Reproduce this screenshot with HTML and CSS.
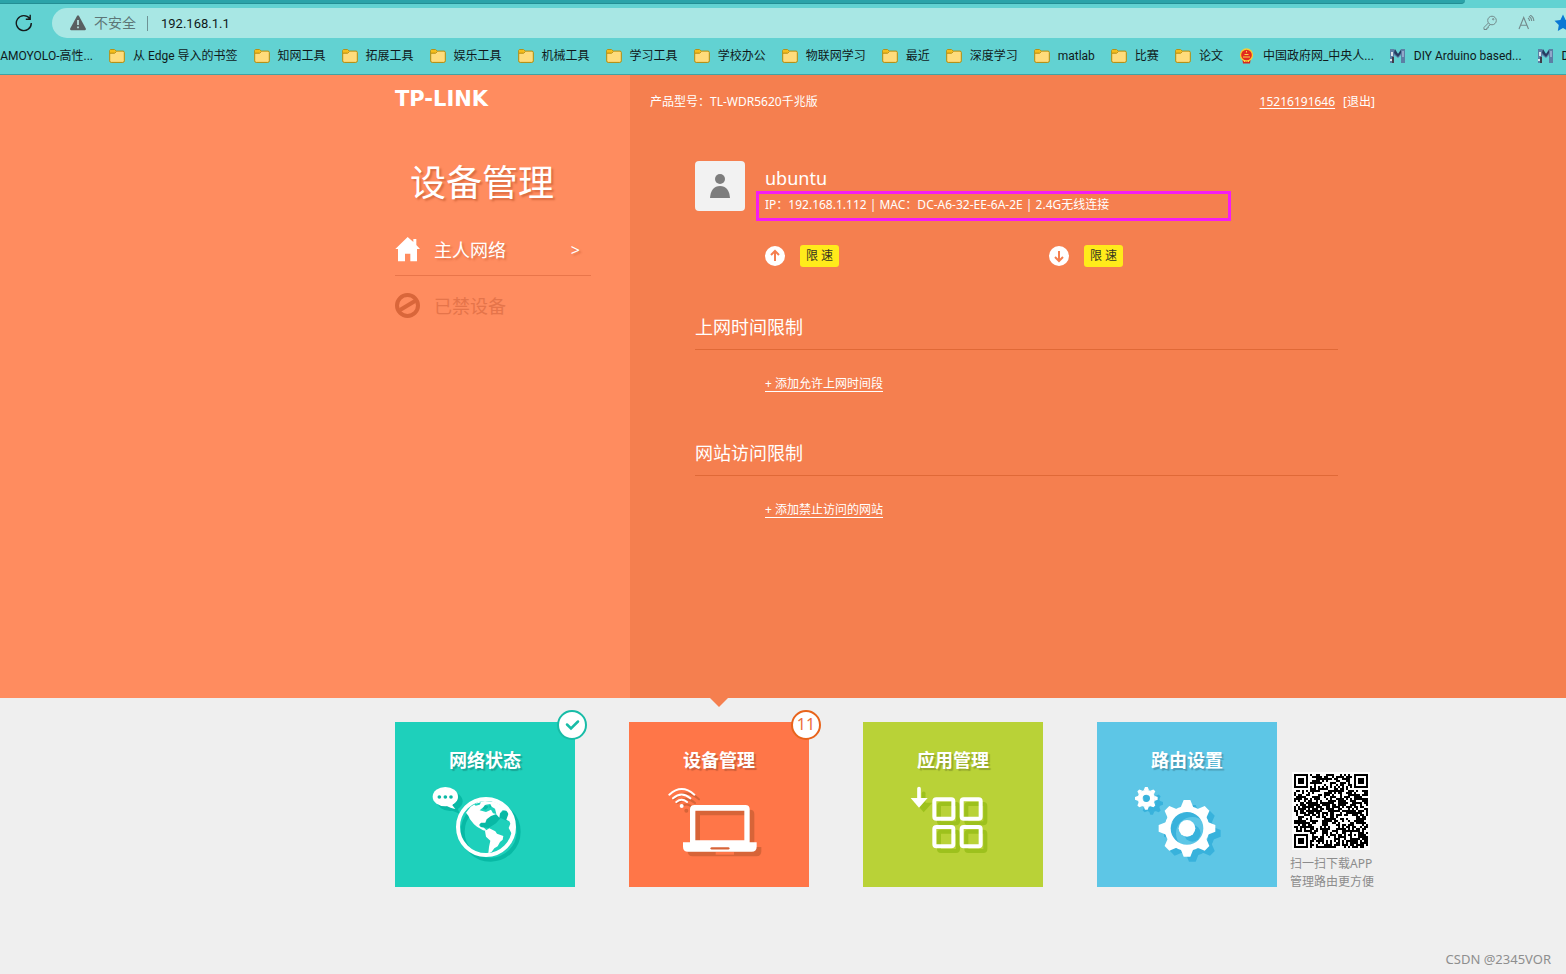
FILE: index.html
```html
<!DOCTYPE html>
<html lang="zh-CN">
<head>
<meta charset="utf-8">
<title>TL-WDR5620千兆版</title>
<link rel="stylesheet" href="styles.css">
</head>
<body>
<svg class="defs" aria-hidden="true">
  <symbol id="folder" viewBox="0 0 16 16"><path d="M.7 4V2.7Q.7 1.6 1.8 1.6H5.5L7.3 3.1H14Q15.3 3.1 15.3 4.4V12.9Q15.3 14.4 13.8 14.4H2.2Q.7 14.4.7 12.9Z" fill="#ffdc7c" stroke="#b48a08"/><path d="M1 2.8Q1 2 1.8 2H5.4L7 3.3 5.6 5H1Z" fill="#f5bd1b"/><path d="M1 5.2H5.6L7.4 3.5" fill="none" stroke="#b48a08"/></symbol>
  <symbol id="mark-m" viewBox="0 0 16 16"><path d="M0 1H4L8 6 11 1H15V15H11V7L8 10 4 7V15H0Z" fill="#5c7fa5"/><path d="M5 1 8 6 11 2V5L8 9 4 5Z" fill="#263c60"/><path d="M1 4H3V8H1ZM0 11H2V13H0Z" fill="#d8e4ea"/><path d="M2 9H4V15H2Z" fill="#433c48"/><path d="M12 3H14V9H12Z" fill="#91a7c9"/></symbol>
</svg>

<header class="browser">
  <div class="tabstrip"></div>
  <div class="toolbar">
    <button class="reload" type="button" aria-label="刷新"><svg width="18" height="18" viewBox="0 0 18 18" fill="none" stroke="#151b1c" stroke-width="1.4"><path d="M16.3 9A7.5 7.5 0 1 1 14.8 4.6M15.2.8V5.2H10.8"/></svg></button>
    <div class="address">
      <svg width="16" height="16" viewBox="0 0 16 16"><path d="M7 1Q8 -.5 9 1L15.8 13.5Q16.2 15.3 14.7 15.3H1.3Q-.2 15.3.2 13.5Z" fill="#595f60"/><path d="M8 5V10M8 11.5V13.2" stroke="#c2eeec" stroke-width="1.6"/></svg>
      <label class="insecure" for="url">不安全</label>
      <input class="url" id="url" type="text" value="192.168.1.1">
      <svg width="14" height="16" viewBox="0 0 14 16" fill="none" stroke="#738a8b"><circle cx="9" cy="5.5" r="4.3"/><circle cx="10.2" cy="4.2" r=".7"/><path d="M5.4 8 1 12.4V14.5H3.8V13H5.2V11.3L7.6 9.5"/></svg>
      <svg class="read" width="17" height="16" viewBox="0 0 17 16" fill="none" stroke="#738a8b" stroke-width="1.1"><path d="M1 14 5.7 2.5 10.5 14M2.7 10.2H8.9M10 3Q11.5 4 11.5 6M11 1.3Q13.7 3 13.7 6M12 0Q15.8 2 15.8 6"/></svg>
      <svg class="star" width="18" height="18" viewBox="0 0 18 18"><path d="M9 .6 11.6 6 17.5 6.8 13.2 11 14.2 17 9 14.1 3.8 17 4.8 11 .5 6.8 6.4 6Z" fill="#0a78d4"/></svg>
    </div>
  </div>
  <nav class="bookmarks" aria-label="书签">
    <a class="bm bm-first" href="#">AMOYOLO-高性...</a>
    <a class="bm" href="#"><svg><use href="#folder"/></svg>从 Edge 导入的书签</a>
    <a class="bm" href="#"><svg><use href="#folder"/></svg>知网工具</a>
    <a class="bm" href="#"><svg><use href="#folder"/></svg>拓展工具</a>
    <a class="bm" href="#"><svg><use href="#folder"/></svg>娱乐工具</a>
    <a class="bm" href="#"><svg><use href="#folder"/></svg>机械工具</a>
    <a class="bm" href="#"><svg><use href="#folder"/></svg>学习工具</a>
    <a class="bm" href="#"><svg><use href="#folder"/></svg>学校办公</a>
    <a class="bm" href="#"><svg><use href="#folder"/></svg>物联网学习</a>
    <a class="bm" href="#"><svg><use href="#folder"/></svg>最近</a>
    <a class="bm" href="#"><svg><use href="#folder"/></svg>深度学习</a>
    <a class="bm" href="#"><svg><use href="#folder"/></svg>matlab</a>
    <a class="bm" href="#"><svg><use href="#folder"/></svg>比赛</a>
    <a class="bm" href="#"><svg><use href="#folder"/></svg>论文</a>
    <a class="bm" href="#"><svg viewBox="0 0 16 16"><path d="M3 9H12L11 15.500H4Z" fill="#d7261e"/><circle cx="7.500" cy="7" r="6" fill="#e22b20" stroke="#f7cf35" stroke-width="1.300"/><path d="M4 8.500H11V9.500H4ZM5.500 6H9.500V7H5.500ZM7 3H8V4.500H7ZM5 12H6V14H5ZM9 12H10V14H9Z" fill="#f9d64a"/></svg>中国政府网_中央人...</a>
    <a class="bm" href="#"><svg><use href="#mark-m"/></svg>DIY Arduino based...</a>
    <a class="bm" href="#"><svg><use href="#mark-m"/></svg>D</a>
  </nav>
</header>

<main class="main">
  <aside class="side">
    <div class="logo">TP-LINK</div>
    <h1 class="title">设备管理</h1>
    <a class="menu menu-on" href="#">
      <svg width="25" height="25" viewBox="0 0 75 75"><path d="M38 0 55 15V6H64V24L75 36H66V73H46V50H30V73H9V36H1Z" fill="#fff"/></svg>
      <span>主人网络</span><span class="more">&gt;</span>
    </a>
    <a class="menu menu-off" href="#">
      <svg width="25" height="25" viewBox="0 0 25 25" fill="none" stroke="#d9663a"><circle cx="12.500" cy="12.500" r="10.500" stroke-width="4"/><path d="M5 17 20 8" stroke-width="4"/></svg>
      <span>已禁设备</span>
    </a>
  </aside>
  <section class="content">
    <div class="topline">
      <span>产品型号：TL-WDR5620千兆版</span>
      <span class="account"><a class="phone" href="#">15216191646</a><a href="#">[退出]</a></span>
    </div>
    <div class="panel">
      <div class="device">
        <svg class="avatar" width="50" height="50" viewBox="0 0 50 50"><rect width="50" height="50" rx="4" fill="#f2f2f2"/><circle cx="25" cy="18" r="5" fill="#7d7d7d"/><path d="M15 37Q16 25 25 25T35 37Z" fill="#7d7d7d"/></svg>
        <div class="info">
          <h2 class="name">ubuntu</h2>
          <p class="net">IP：192.168.1.112 | MAC：DC-A6-32-EE-6A-2E | 2.4G无线连接</p>
        </div>
      </div>
      <div class="speeds">
        <div class="speed"><svg width="20" height="20" viewBox="0 0 20 20"><circle cx="10" cy="10" r="10" fill="#fff"/><path d="M10 15V6M6 9 10 5 14 9" fill="none" stroke="#f57f4f" stroke-width="2"/></svg><button class="limit" type="button">限 速</button></div>
        <div class="speed"><svg width="20" height="20" viewBox="0 0 20 20"><circle cx="10" cy="10" r="10" fill="#fff"/><path d="M10 5V14M6 11 10 15 14 11" fill="none" stroke="#f57f4f" stroke-width="2"/></svg><button class="limit" type="button">限 速</button></div>
      </div>
      <h3 class="section">上网时间限制</h3>
      <a class="add" href="#">+ 添加允许上网时间段</a>
      <h3 class="section">网站访问限制</h3>
      <a class="add" href="#">+ 添加禁止访问的网站</a>
    </div>
  </section>
</main>

<footer class="footer">
  <nav class="tiles">
    <a class="tile tile-status" href="#">
      <span>网络状态</span>
      <svg class="pic" viewBox="120 276 330 240">
        <defs><g id="lands"><path d="M228 368 242 350 265 336 285 333 318 337 343 352 350 362 338 361 330 370 328 383 318 372 303 378 290 388 286 398 273 398 267 405 272 411 282 413 292 424 279 421 261 410 252 403 240 388 235 377Z"/><path d="M285 423 298 415 316 424 321 431 340 438 338 449 330 456 323 469 313 475 304 487 295 490 297 471 301 452 288 440Z"/><path d="M357 367 349 389 358 394 361 401 356 414 364 429 375 432 375 390Z"/></g></defs>
        <g fill="#08b9a5" stroke="#08b9a5" transform="translate(14 14)">
          <ellipse cx="166" cy="320" rx="38" ry="29" stroke="none"/><path d="M165 345 195 357 187 335Z" stroke="none"/>
          <circle cx="288" cy="411" r="84" fill="none" stroke-width="12"/>
        </g>
        <path d="M268 393 290 380 330 372 345 358 358 370 350 392 332 384 318 400 296 414 272 411Z" fill="#08b9a5"/>
        <g fill="#fff"><ellipse cx="166" cy="320" rx="38" ry="29"/><path d="M165 344Q183 355 196 357L187 346 192 336Z"/></g>
        <g fill="#08b9a5"><circle cx="148" cy="321" r="5.500"/><circle cx="166" cy="321" r="5.500"/><circle cx="183" cy="321" r="5.500"/></g>
        <circle cx="288" cy="411" r="84" fill="none" stroke="#fff" stroke-width="12"/>
        <use href="#lands" fill="#fff"/>
        <path d="M252 343 273 337 269 344 257 347ZM287 344 301 342 305 350 315 356 319 372 309 370 303 359 288 366 269 361 278 353Z" fill="#1ed0bb"/><path d="M285 345 296 350 287 359 278 357ZM299 344 304 350 298 353Z" fill="#08b9a5"/>
      </svg>
      <svg class="badge" viewBox="0 0 30 30"><circle cx="15" cy="15" r="14" fill="#fff" stroke="#18bca7" stroke-width="2"/><path d="M10 14.500 14 18.500 21 11.500" fill="none" stroke="#18bca7" stroke-width="2.500" stroke-linecap="round"/></svg>
    </a>
    <a class="tile tile-device" href="#">
      <span>设备管理</span>
      <svg class="pic" viewBox="132 276 330 240">
        <defs><g id="laptop"><path d="M224 345H376Q389 345 389 358V457H410V470Q410 485 395 485H204Q189 485 189 470V457H210V358Q210 345 224 345ZM226 362V451H373V362Z" fill-rule="evenodd"/><circle cx="185" cy="348" r="6"/></g><g id="waves" fill="none" stroke-width="6" stroke-linecap="round"><path d="M148 314Q185 280 223 314M159 325Q185 302 211 325M169 336Q185 323 201 336"/></g></defs>
        <g transform="translate(14 14)" fill="#d76438" stroke="#d76438"><use href="#laptop" stroke="none"/><use href="#waves"/></g>
        <path d="M287 490H342" stroke="#ff7648" stroke-width="8"/>
        <g fill="#fff" stroke="#fff"><use href="#laptop" stroke="none"/><use href="#waves"/></g>
        <path d="M275 475H325" stroke="#d76438" stroke-width="7" stroke-linecap="round"/>
      </svg>
      <span class="badge count">11</span>
    </a>
    <a class="tile tile-apps" href="#">
      <span>应用管理</span>
      <svg class="pic" viewBox="114 216 330 240">
        <defs><g id="apps"><g fill="none" stroke-width="12"><rect x="223" y="268" width="57" height="58" rx="6"/><rect x="305" y="268" width="57" height="58" rx="6"/><rect x="223" y="351" width="57" height="58" rx="6"/><rect x="305" y="351" width="57" height="58" rx="6"/></g><path d="M177 236V270" fill="none" stroke-width="11" stroke-linecap="round"/><path d="M152 264H203L177 293Z" stroke="none"/></g></defs>
        <use href="#apps" fill="#9dc11d" stroke="#9dc11d" x="14" y="14"/>
        <use href="#apps" fill="#fff" stroke="#fff"/>
      </svg>
    </a>
    <a class="tile tile-router" href="#">
      <span>路由设置</span>
      <svg class="pic" viewBox="126 216 330 240">
        <defs>
          <g id="tooth"><path d="M-20 -60 -10 -85H10L20 -60Z"/></g>
          <g id="teeth"><use href="#tooth"/><use href="#tooth" transform="rotate(45)"/><use href="#tooth" transform="rotate(90)"/><use href="#tooth" transform="rotate(135)"/><use href="#tooth" transform="rotate(180)"/><use href="#tooth" transform="rotate(225)"/><use href="#tooth" transform="rotate(270)"/><use href="#tooth" transform="rotate(315)"/></g>
          <g id="gears"><g transform="translate(291 355)"><use href="#teeth" stroke="none"/><circle r="58" fill="none" stroke-width="18"/><circle r="25" stroke="none"/></g><g transform="translate(169 265)"><use href="#teeth" stroke="none" transform="scale(.4)"/><circle r="18.500" fill="none" stroke-width="15"/></g></g>
        </defs>
        <use href="#gears" fill="#38b2dc" stroke="#38b2dc" x="16" y="15"/>
        <use href="#gears" fill="#fff" stroke="#fff"/>
      </svg>
    </a>
    <div class="app">
      <svg class="qr" viewBox="-1 -1 39 39" shape-rendering="crispEdges" role="img" aria-label="二维码"><path fill="#fff" d="M-1-1H38V38H-1Z"/><path id="qr-cells"/></svg>
      <p>扫一扫下载APP<br>管理路由更方便</p>
    </div>
  </nav>
  <p class="credit">CSDN @2345VOR</p>
</footer>
<script src="qr.js"></script>
</body>
</html>
```

FILE: styles.css
```css
* { box-sizing: border-box; }
body {
  margin: 0;
  min-height: 100vh;
  display: flex;
  flex-direction: column;
  overflow-x: hidden;
  font: 12px/20px "Noto Sans", "Noto Sans CJK SC", sans-serif;
  color: #fff;
  background: #efefef;
}
h1, h2, h3, p { margin: 0; font-weight: 400; }
a { color: inherit; text-decoration: none; }
button, input { font: inherit; border: 0; padding: 0; background: none; }
svg { display: block; flex: none; }
.defs { position: absolute; width: 0; height: 0; }

.browser {
  background: #62d2d2;
  border-bottom: 1px solid #3fa3a4;
  color: #10191a;
  font-family: Roboto, "Noto Sans CJK SC", sans-serif;
  overflow: hidden;
}
.tabstrip {
  height: 4px;
  margin-right: 101px;
  background: #2ba3a9;
  border-bottom: 1px solid #238e94;
  border-bottom-right-radius: 4px;
}
.toolbar { display: flex; align-items: center; padding: 4px 0 0 15px; }
.reload { width: 18px; height: 18px; margin-right: 19px; }
.address {
  flex: 1;
  display: flex;
  align-items: center;
  height: 30px;
  margin-right: -16px;
  padding: 0 10px 0 18px;
  border-radius: 15px;
  background: #a8e7e4;
  font-size: 14px;
}
.insecure { margin: 0 11px 0 8px; color: #5d7677; }
.url {
  flex: 1;
  height: 15px;
  padding-left: 13px;
  border-left: 1px solid #6e9294;
  font-size: 13px;
  line-height: 15px;
  color: #10191a;
}
.read { margin: 0 19px 0 21px; }
.bookmarks { display: flex; gap: 16px; height: 36px; align-items: center; white-space: nowrap; }
.bm { display: flex; gap: 8px; align-items: center; flex: none; }
.bm svg { width: 16px; height: 16px; }
.bm-first { width: 93px; justify-content: flex-end; }

.main { flex: 1; display: grid; grid-template-columns: 630px 1fr; background: #f57f4f; }
.side { background: #ff8c5f; padding: 14px 39px 40px 395px; }
.logo { font: bold 21px/20px "DejaVu Sans", sans-serif; }
.title {
  margin: 50px 0 30px 15px;
  font-size: 36px;
  line-height: 48px;
  text-shadow: 2px 2px 2px rgba(160, 60, 20, .4);
}
.menu { display: flex; align-items: center; gap: 14px; font-size: 18px; line-height: 24px; }
.menu-on {
  padding-bottom: 13px;
  border-bottom: 1px solid #e9754a;
  text-shadow: 2px 2px 2px rgba(160, 60, 20, .3);
}
.more { margin: 0 11px 0 auto; font-size: 16px; }
.menu-off { padding-top: 17px; color: #e5744a; }

.content { padding: 17px 20px 40px; }
.topline { display: flex; justify-content: space-between; max-width: 725px; }
.account { display: flex; gap: 8px; }
.phone { text-decoration: underline; text-underline-offset: 2px; }
.panel { max-width: 688px; padding: 49px 0 0 45px; }
.device { display: flex; gap: 11px; }
.info { flex: 1; max-width: 475px; padding-top: 5px; }
.name { padding-left: 9px; margin-bottom: 1px; font-size: 18px; line-height: 24px; }
.net { padding: 0 0 2px 6px; border: 3px solid #f51cf5; line-height: 22px; }
.speeds { display: grid; grid-template-columns: 284px 284px; padding: 24px 0 0 70px; }
.speed { display: flex; align-items: center; gap: 15px; }
.limit { width: 39px; height: 22px; border-radius: 3px; background: #ffeb1b; color: #353520; line-height: 22px; }
.section {
  margin-top: 48px;
  padding-bottom: 10px;
  border-bottom: 1px solid #e06937;
  font-size: 18px;
  line-height: 24px;
}
.add { display: block; width: max-content; margin: 27px 0 49px 70px; border-bottom: 1px solid #fff; line-height: 14px; }

.footer { padding: 24px 15px 5px 395px; }
.tiles { display: flex; align-items: flex-start; gap: 54px; }
.tile {
  position: relative;
  flex: none;
  display: flex;
  flex-direction: column;
  align-items: center;
  gap: 10px;
  width: 180px;
  padding: 26px 0 25px;
  font-size: 18px;
  line-height: 24px;
  font-weight: 700;
  text-shadow: 2px 2px 1px rgba(0, 0, 0, .2);
}
.pic { width: 110px; height: 80px; }
.tile-status { background: #1ed0bb; }
.tile-device { background: #ff7648; }
.tile-apps { background: #b9d237; }
.tile-router { background: #5dc6e6; }
.tile-device::before {
  content: "";
  position: absolute;
  top: -24px;
  left: 81px;
  border: 9px solid transparent;
  border-top-color: #f57f4f;
  border-bottom: 0;
}
.badge { position: absolute; top: -12px; right: -12px; width: 30px; height: 30px; }
.count {
  border: 2px solid #e8641c;
  border-radius: 50%;
  background: #fff;
  color: #ee6d3b;
  font-size: 16px;
  font-weight: 400;
  line-height: 25px;
  text-align: center;
  text-shadow: none;
}
.app { margin: 50px 0 0 -41px; color: #8c8c8c; line-height: 18px; white-space: nowrap; }
.qr { width: 78px; height: 78px; margin: 0 0 5px 2px; }
.credit { padding-top: 58px; color: #8e8e8e; font-size: 13px; text-align: right; }
```

FILE: qr.js
```js
const size = 37;
let seed = 5620;
const next = () => (seed = (seed * 1103515245 + 12345) % 2147483648) / 2147483648;
const square = (x, y, cx, cy, rings) => rings.includes(Math.max(Math.abs(x - cx), Math.abs(y - cy)));
const near = (x, y, cx, cy, r) => Math.max(Math.abs(x - cx), Math.abs(y - cy)) <= r;
const corners = [[3, 3], [33, 3], [3, 33]];
let path = "";
for (let y = 0; y < size; y++) {
  for (let x = 0; x < size; x++) {
    let dark = next() > 0.42;
    if (x === 6 || y === 6) dark = (x + y) % 2 === 0;
    if (near(x, y, 30, 30, 2)) dark = square(x, y, 30, 30, [0, 2]);
    for (const [cx, cy] of corners) {
      if (near(x, y, cx, cy, 4)) dark = square(x, y, cx, cy, [0, 1, 3]);
    }
    if (dark) path += `M${x} ${y}h1v1h-1z`;
  }
}
document.getElementById("qr-cells").setAttribute("d", path);
```
